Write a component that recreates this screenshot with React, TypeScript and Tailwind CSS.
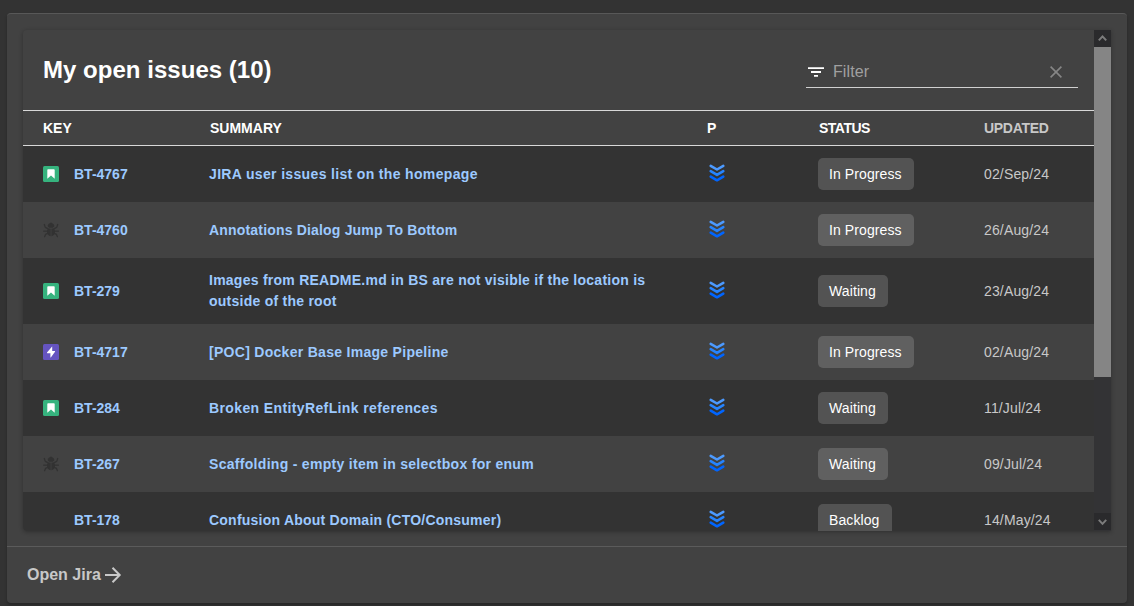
import React from "react";

type Kind = "story" | "bug" | "epic" | "none";

interface Issue {
  kind: Kind;
  id: string;
  summary: string;
  status: string;
  updated: string;
  tracking: string;
}

const issues: Issue[] = [
  { kind: "story", id: "BT-4767", summary: "JIRA user issues list on the homepage", status: "In Progress", updated: "02/Sep/24", tracking: "tracking-[0.34px]" },
  { kind: "bug", id: "BT-4760", summary: "Annotations Dialog Jump To Bottom", status: "In Progress", updated: "26/Aug/24", tracking: "tracking-[0.18px]" },
  { kind: "story", id: "BT-279", summary: "Images from README.md in BS are not visible if the location is outside of the root", status: "Waiting", updated: "23/Aug/24", tracking: "tracking-[0.25px]" },
  { kind: "epic", id: "BT-4717", summary: "[POC] Docker Base Image Pipeline", status: "In Progress", updated: "02/Aug/24", tracking: "tracking-[0.29px]" },
  { kind: "story", id: "BT-284", summary: "Broken EntityRefLink references", status: "Waiting", updated: "11/Jul/24", tracking: "tracking-[0.38px]" },
  { kind: "bug", id: "BT-267", summary: "Scaffolding - empty item in selectbox for enum", status: "Waiting", updated: "09/Jul/24", tracking: "tracking-[0.3px]" },
  { kind: "none", id: "BT-178", summary: "Confusion About Domain (CTO/Consumer)", status: "Backlog", updated: "14/May/24", tracking: "tracking-[0.23px]" },
];

const columns = "grid grid-cols-[166px_498px_111px_166px_130px]";

function KindIcon({ kind }: { kind: Kind }) {
  if (kind === "story") {
    return (
      <svg width="16" height="16" viewBox="0 0 16 16">
        <rect width="16" height="16" rx="1.5" fill="#36b37e" />
        <path d="M5.100 3.200h5.800a.8.8 0 0 1 .8.8v8.800L8 9.500l-3.700 3.300V4a.8.8 0 0 1 .8-.8z" fill="#fff" />
      </svg>
    );
  }
  if (kind === "epic") {
    return (
      <svg width="16" height="16" viewBox="0 0 16 16">
        <rect width="16" height="16" rx="1.5" fill="#6554c0" />
        <path d="M8.9 2.7 4 8.4c-.2.4 0 .8.4.8h3v4c0 .4.4.4.6.1l4-5.6c.2-.4 0-.8-.4-.8H9.2V3c0-.4-.1-.5-.3-.3z" fill="#fff" />
      </svg>
    );
  }
  if (kind === "bug") {
    return (
      <svg width="16" height="16" viewBox="0 0 16 16" fill="none" stroke="#323232" strokeWidth="1.3" strokeLinecap="round" strokeLinejoin="round">
        <path d="M4.700 4.200C4.700 2.500 5.700 1.500 7 1.300L8 .2l1 1.100c1.300.2 2.300 1.200 2.300 2.900L9.900 5.700H6.100z" fill="#323232" stroke="none" />
        <path d="M7.600 6.400v7.900C5.500 13.900 4 12.200 4 9.800c0-1.300.4-2.500 1-3.400zM8.400 6.400v7.900c2.100-.4 3.600-2.100 3.600-4.500 0-1.300-.4-2.500-1-3.400z" fill="#323232" stroke="none" />
        <path d="M4.800 6.700 2.300 5.400 1.300 2.500M4.300 9.200H.7M4.700 11.400l-2.200 1-.9 2.300M11.200 6.700l2.500-1.300 1-2.900M11.700 9.200h3.600M11.300 11.400l2.200 1 .9 2.300" />
      </svg>
    );
  }
  return null;
}

function LowestIcon() {
  return (
    <svg width="20" height="20" viewBox="0 0 20 20" fill="none" strokeWidth="2.6" strokeLinecap="round" strokeLinejoin="round">
      <path d="M3.700 2.800 10 6.500l6.300-3.700" stroke="#4c9aff" />
      <path d="M3.700 8.200 10 11.900l6.300-3.700" stroke="#2684ff" />
      <path d="M3.700 13.600 10 17.300l6.300-3.700" stroke="#0065ff" />
    </svg>
  );
}

function Scrollbar() {
  return (
    <div className="flex w-[17px] shrink-0 flex-col bg-[#333335]">
      <div className="flex h-[17px] items-center justify-center bg-[#2a2a2c]">
        <svg width="17" height="17" fill="none" stroke="#7c7c7c" strokeWidth="2"><path d="m4.800 10.400 3.700-4 3.700 4" /></svg>
      </div>
      <div className="h-[330px] bg-[#858585]" />
      <div className="mt-auto mb-px flex h-[17px] items-center justify-center bg-[#2a2a2c]">
        <svg width="17" height="17" fill="none" stroke="#7c7c7c" strokeWidth="2"><path d="m4.800 6.900 3.700 4 3.700-4" /></svg>
      </div>
    </div>
  );
}

export default function App() {
  return (
    <div className="h-[606px] w-full overflow-hidden bg-[#333333] pt-[13px] pl-[7px] font-['Liberation_Sans',Arial,sans-serif] text-white">
      <div className="flex h-[590px] w-[1120px] flex-col rounded border-t border-[#585858] bg-[#424242] shadow-[0_2px_3px_rgba(0,0,0,0.25)]">
        <div className="px-4 pt-4">
          <div className="flex h-[501px] overflow-hidden rounded-l shadow-[0_1px_4px_rgba(0,0,0,0.3)]">
            <div className="flex min-w-0 flex-1 flex-col">
              <div className="flex h-20 shrink-0 items-start justify-between pr-4 pl-5">
                <h2 className="pt-6 text-2xl leading-8 font-bold tracking-[0.03px]">My open issues (10)</h2>
                <div className="mt-[26px] flex h-8 w-[272px] items-center border-b border-[#d0d0d0]">
                  <svg className="ml-0.5" width="16" height="14" viewBox="0 0 16 14" fill="#fff">
                    <path d="M0 2.200h16V4H0zM3 6.100h10v1.800H3zM6 10h4v1.800H6z" />
                  </svg>
                  <span className="ml-[9px] flex-1 text-base leading-5 tracking-[0.1px] text-[#a0a0a0]">Filter</span>
                  <svg className="mt-px mr-4" width="12" height="12" fill="none" stroke="#868686" strokeWidth="1.600">
                    <path d="m.6.6 10.800 10.800M11.400.6.6 11.400" />
                  </svg>
                </div>
              </div>
              <div className={`${columns} h-9 shrink-0 items-center border-y border-[#d8d8d8] pl-5 text-sm font-bold`}>
                <span>KEY</span>
                <span className="pl-px">SUMMARY</span>
                <span>P</span>
                <span className="pl-px tracking-[-0.5px]">STATUS</span>
                <span className="tracking-[-0.3px] text-[#c8c8c8]">UPDATED</span>
              </div>
              {issues.map((issue, i) => (
                <div
                  key={issue.id}
                  className={`${columns} shrink-0 items-center pl-5 text-sm ${issue.summary.length > 70 ? "h-[66px]" : "h-14"} ${i % 2 ? "bg-[#424242]" : "bg-[#333333]"}`}
                >
                  <div className="flex items-center">
                    <span className="w-[31px]"><KindIcon kind={issue.kind} /></span>
                    <span className="font-bold text-[#9cc9ff]">{issue.id}</span>
                  </div>
                  <span className={`pr-12 leading-[21px] font-bold text-[#9cc9ff] ${issue.tracking}`}>{issue.summary}</span>
                  <span className="-mt-0.5"><LowestIcon /></span>
                  <span className={`flex h-8 items-center rounded-[5px] bg-white/16 pl-[11px] tracking-[0.1px] ${issue.status === "In Progress" ? "w-24" : issue.status === "Waiting" ? "w-[70px]" : "w-[74px]"}`}>{issue.status}</span>
                  <span className="tracking-[0.15px] text-[#c8c8c8]">{issue.updated}</span>
                </div>
              ))}
            </div>
            <Scrollbar />
          </div>
        </div>
        <div className="mt-[15px] flex flex-1 items-center border-t border-[#5b5b5b] pl-5 text-base font-bold text-[#c8c8c8]">
          <span>Open Jira</span>
          <svg className="ml-1" width="17" height="16" fill="none" stroke="#c8c8c8" strokeWidth="2">
            <path d="M0 8h15M7.500.8 14.700 8l-7.200 7.200" />
          </svg>
        </div>
      </div>
    </div>
  );
}
